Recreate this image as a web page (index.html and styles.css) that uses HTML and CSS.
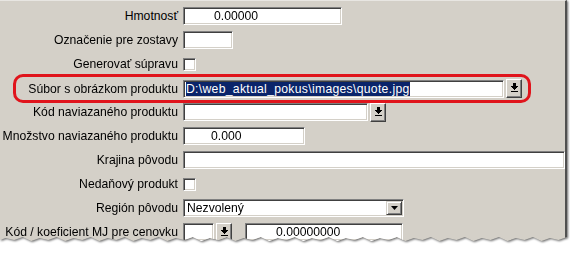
FILE: index.html
```html
<!DOCTYPE html>
<html>
<head>
<meta charset="utf-8">
<link rel="stylesheet" href="styles.css">
</head>
<body>
<div class="frame">
  <div class="panel">
    <div class="row">
      <div class="label">Hmotnosť</div>
      <div class="field w159 pad30">0.00000</div>
    </div>
    <div class="row">
      <div class="label">Označenie pre zostavy</div>
      <div class="field w50"></div>
    </div>
    <div class="row">
      <div class="label">Generovať súpravu</div>
      <div class="check"></div>
    </div>
    <div class="row hl">
      <div class="label">Súbor s obrázkom produktu</div>
      <div class="field w320"><span class="sel">D:\web_aktual_pokus\images\quote.jpg</span></div>
      <div class="btn"><svg width="9" height="10" viewBox="0 0 9 10"><path d="M3 0h3v3h2v1h-1v1h-1v1h-1v1h-1v-1h-1v-1h-1v-1h-1v-1h2z" fill="#000"/><rect x="1" y="8" width="7" height="1" fill="#000"/></svg></div>
    </div>
    <div class="row">
      <div class="label">Kód naviazaného produktu</div>
      <div class="field w184"></div>
      <div class="btn"><svg width="9" height="10" viewBox="0 0 9 10"><path d="M3 0h3v3h2v1h-1v1h-1v1h-1v1h-1v-1h-1v-1h-1v-1h-1v-1h2z" fill="#000"/><rect x="1" y="8" width="7" height="1" fill="#000"/></svg></div>
    </div>
    <div class="row">
      <div class="label">Množstvo naviazaného produktu</div>
      <div class="field w122 pad28">0.000</div>
    </div>
    <div class="row">
      <div class="label">Krajina pôvodu</div>
      <div class="field wfull"></div>
    </div>
    <div class="row">
      <div class="label">Nedaňový produkt</div>
      <div class="check"></div>
    </div>
    <div class="row">
      <div class="label">Región pôvodu</div>
      <div class="field select w221">
        <span class="seltext">Nezvolený</span>
        <div class="dd"><svg width="7" height="4" viewBox="0 0 7 4"><path d="M0 0h7l-3.5 4z" fill="#000"/></svg></div>
      </div>
    </div>
    <div class="row">
      <div class="label">Kód / koeficient MJ pre cenovku</div>
      <div class="field w31"></div>
      <div class="btn"><svg width="9" height="10" viewBox="0 0 9 10"><path d="M3 0h3v3h2v1h-1v1h-1v1h-1v1h-1v-1h-1v-1h-1v-1h-1v-1h2z" fill="#000"/><rect x="1" y="8" width="7" height="1" fill="#000"/></svg></div>
      <div class="field w158 pad30 gap13">0.00000000</div>
    </div>
  </div>
</div>
</body>
</html>
```
FILE: styles.css
```css
html, body {
  margin: 0;
  padding: 0;
  background: #ffffff;
}

.frame {
  width: 568px;
  filter: drop-shadow(1px 1px 1px rgba(0,0,0,0.6));
}

.panel {
  box-sizing: border-box;
  width: 567px;
  height: 244px;
  background: #d4d0c8;
  border-right: 2px solid #505050;
  border-top: 1px solid #e8e6e2;
  padding-top: 3px;
  font-family: "Liberation Sans", Arial, sans-serif;
  font-size: 12.2px;
  color: #000;
  clip-path: polygon(0 0, 100% 0, 100% 237px,
    98.5% 240px, 97% 238px, 95.5% 241px, 94% 237px, 92.5% 240px, 91% 238px, 89.5% 241px,
    88% 237px, 86.5% 240px, 85% 238px, 83.5% 241px, 82% 237px, 80.5% 240px, 79% 238px,
    77.5% 241px, 76% 237px, 74.5% 240px, 73% 238px, 71.5% 241px, 70% 237px, 68.5% 240px,
    67% 238px, 65.5% 241px, 64% 237px, 62.5% 240px, 61% 238px, 59.5% 241px, 58% 237px,
    56.5% 240px, 55% 238px, 53.5% 241px, 52% 237px, 50.5% 240px, 49% 238px, 47.5% 241px,
    46% 237px, 44.5% 240px, 43% 238px, 41.5% 241px, 40% 237px, 38.5% 240px, 37% 238px,
    35.5% 241px, 34% 237px, 32.5% 240px, 31% 238px, 29.5% 241px, 28% 237px, 26.5% 240px,
    25% 238px, 23.5% 241px, 22% 237px, 20.5% 240px, 19% 238px, 17.5% 241px, 16% 237px,
    14.5% 240px, 13% 238px, 11.5% 241px, 10% 237px, 8.5% 240px, 7% 238px, 5.5% 241px,
    4% 237px, 2.5% 240px, 1% 238px, 0 240px);
}

.row {
  display: flex;
  align-items: center;
  height: 24px;
}

.label {
  box-sizing: border-box;
  width: 183px;
  padding-right: 5px;
  text-align: right;
  white-space: nowrap;
  flex: none;
}

.hl {
  box-sizing: border-box;
  height: 29px;
  width: 518px;
  margin: -2px 0 -3px 13px;
  border: 3px solid #e0141c;
  border-radius: 10px;
}

.hl .label {
  width: 167px;
}

.field {
  box-sizing: border-box;
  height: 18px;
  background: #fff;
  border-top: 1px solid #808080;
  border-left: 1px solid #808080;
  border-right: 1px solid #ffffff;
  border-bottom: 1px solid #ffffff;
  box-shadow: inset 1px 1px 0 #404040, inset -1px -1px 0 #d4d0c8;
  flex: none;
  line-height: 16px;
  padding-left: 3px;
  white-space: nowrap;
  overflow: hidden;
}

.w159 { width: 159px; }
.w50 { width: 50px; }
.w320 { width: 321px; padding-left: 2px; }
.w184 { width: 185px; }
.w122 { width: 122px; }
.wfull { width: 382px; }
.w221 { width: 221px; }
.w31 { width: 31px; }
.w158 { width: 158px; }
.pad30 { padding-left: 30px; }
.pad28 { padding-left: 27px; }
.gap13 { margin-left: 13px; }

.sel {
  background: #0a246a;
  color: #fff;
  display: inline-block;
  line-height: 14px;
  margin-top: 1px;
  letter-spacing: 0.3px;
}

.check {
  box-sizing: border-box;
  width: 13px;
  height: 13px;
  background: #fff;
  border-top: 1px solid #808080;
  border-left: 1px solid #808080;
  border-right: 1px solid #ffffff;
  border-bottom: 1px solid #ffffff;
  box-shadow: inset 1px 1px 0 #404040, inset -1px -1px 0 #d4d0c8;
}

.btn {
  box-sizing: border-box;
  width: 16px;
  height: 19px;
  margin-left: 2px;
  background: #d4d0c8;
  border-top: 1px solid #ffffff;
  border-left: 1px solid #ffffff;
  border-right: 1px solid #404040;
  border-bottom: 1px solid #404040;
  box-shadow: inset -1px -1px 0 #808080;
  display: flex;
  align-items: center;
  justify-content: center;
  flex: none;
}

.btn svg { display: block; margin-top: -1px; }

.select {
  display: flex;
  align-items: center;
  justify-content: space-between;
  padding-right: 1px;
}

.dd {
  box-sizing: border-box;
  width: 16px;
  height: 14px;
  background: #d4d0c8;
  border-top: 1px solid #d4d0c8;
  border-left: 1px solid #d4d0c8;
  border-right: 1px solid #404040;
  border-bottom: 1px solid #404040;
  box-shadow: inset 1px 1px 0 #ffffff, inset -1px -1px 0 #808080;
  display: flex;
  align-items: center;
  justify-content: center;
}

.dd svg { display: block; }
```
